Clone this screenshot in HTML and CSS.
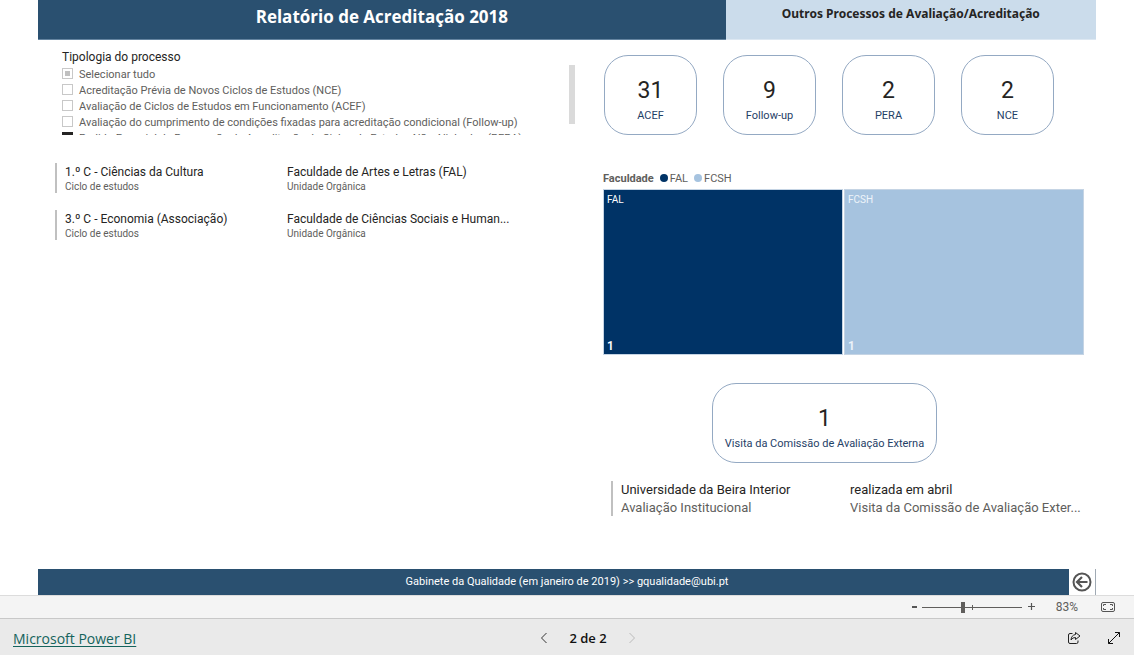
FILE: index.html
```html
<!DOCTYPE html>
<html lang="pt">
<head>
<meta charset="utf-8">
<title>Relatório de Acreditação 2018</title>
<link rel="stylesheet" href="styles.css">
</head>
<body>
<main class="report">
  <header class="header">
    <h1 class="header-title">Relatório de Acreditação 2018</h1>
    <h2 class="header-side">Outros Processos de Avaliação/Acreditação</h2>
  </header>

  <div class="content">
    <section class="left">
      <fieldset class="slicer">
        <legend class="slicer-title">Tipologia do processo</legend>
        <div class="slicer-body">
          <div class="slicer-list">
            <label class="option"><input class="check partial" type="checkbox">Selecionar tudo</label>
            <label class="option"><input class="check" type="checkbox">Acreditação Prévia de Novos Ciclos de Estudos (NCE)</label>
            <label class="option"><input class="check" type="checkbox">Avaliação de Ciclos de Estudos em Funcionamento (ACEF)</label>
            <label class="option"><input class="check" type="checkbox">Avaliação do cumprimento de condições fixadas para acreditação condicional (Follow-up)</label>
            <label class="option"><input class="check" type="checkbox" checked>Pedido Especial de Renovação da Acreditação de Ciclos de Estudos Não-Alinhados (PERA)</label>
          </div>
          <div class="scroll-thumb"></div>
        </div>
      </fieldset>

      <div class="rows">
        <div class="row">
          <div class="cell"><p class="value">1.º C - Ciências da Cultura</p><p class="caption">Ciclo de estudos</p></div>
          <div class="cell"><p class="value">Faculdade de Artes e Letras (FAL)</p><p class="caption">Unidade Orgânica</p></div>
        </div>
        <div class="row">
          <div class="cell"><p class="value">3.º C - Economia (Associação)</p><p class="caption">Ciclo de estudos</p></div>
          <div class="cell"><p class="value">Faculdade de Ciências Sociais e Human...</p><p class="caption">Unidade Orgânica</p></div>
        </div>
      </div>
    </section>

    <section class="right">
      <div class="cards">
        <div class="card"><span class="number">31</span><span class="label">ACEF</span></div>
        <div class="card"><span class="number">9</span><span class="label">Follow-up</span></div>
        <div class="card"><span class="number">2</span><span class="label">PERA</span></div>
        <div class="card"><span class="number">2</span><span class="label">NCE</span></div>
      </div>

      <div class="legend">
        <strong class="legend-title">Faculdade</strong>
        <span class="legend-item"><i class="dot dot-dark"></i>FAL</span>
        <span class="legend-item"><i class="dot dot-light"></i>FCSH</span>
      </div>
      <div class="treemap">
        <div class="tile tile-dark"><span>FAL</span><span class="tile-value">1</span></div>
        <div class="tile tile-light"><span>FCSH</span><span class="tile-value">1</span></div>
      </div>

      <div class="card card-wide"><span class="number">1</span><span class="label">Visita da Comissão de Avaliação Externa</span></div>

      <div class="visit">
        <div class="cell"><p class="value">Universidade da Beira Interior</p><p class="caption">Avaliação Institucional</p></div>
        <div class="cell"><p class="value">realizada em abril</p><p class="caption">Visita da Comissão de Avaliação Exter...</p></div>
      </div>
    </section>
  </div>

  <footer class="report-footer">
    <p class="contact">Gabinete da Qualidade (em janeiro de 2019) &gt;&gt; gqualidade@ubi.pt</p>
    <button class="back" aria-label="Voltar">
      <svg width="20" height="20" viewBox="0 0 20 20" fill="none" stroke="#555" stroke-width="2"><circle cx="10" cy="10" r="8.5"/><path d="M15.500 10H5.500M10 5l-5 5 5 5" stroke-width="2.200"/></svg>
    </button>
  </footer>
</main>

<div class="zoombar">
  <button class="zoom-step" aria-label="Reduzir"><svg width="7" height="11" viewBox="0 0 7 11"><path d="M1 4h5v2H1z" fill="#555"/></svg></button>
  <input class="zoom-range" type="range" min="0" max="100" value="41" aria-label="Zoom">
  <button class="zoom-step" aria-label="Ampliar"><svg width="9" height="11" viewBox="0 0 9 11"><path d="M1 4.500h7M4.500 1v7" stroke="#555" stroke-width="1.200"/></svg></button>
  <button class="zoom-level">83%</button>
  <button class="fit" aria-label="Ajustar à página">
    <svg width="14" height="11" viewBox="0 0 14 11" fill="none" stroke="#555"><rect x=".5" y=".5" width="13" height="9" rx="1.500"/><path d="M5 2.500H2.500V4M9 2.500h2.500V4M5 7.500H2.500V6M9 7.500h2.500V6"/></svg>
  </button>
</div>

<nav class="statusbar">
  <a class="brand" href="#">Microsoft Power BI</a>
  <div class="pager">
    <button class="icon-button" aria-label="Página anterior"><svg width="8" height="12" viewBox="0 0 8 12" fill="none" stroke="#333"><path d="M6.500 1l-5 5 5 5"/></svg></button>
    <span>2 de 2</span>
    <button class="icon-button" aria-label="Página seguinte" disabled><svg width="8" height="12" viewBox="0 0 8 12" fill="none" stroke="#bbb"><path d="M1.500 1l5 5-5 5"/></svg></button>
  </div>
  <div class="actions">
    <button class="icon-button" aria-label="Partilhar"><svg width="14" height="14" viewBox="0 0 14 14" fill="none" stroke="#222"><path d="M5.500 2.500H3q-1.500 0-1.500 1.500v7q0 1.500 1.500 1.500h6.500q1.500 0 1.500-1.500v-1.500"/><path d="M8.500 1.500L13 5 8.500 8.500v-2Q5.500 6.300 4 9q.3-4.800 4.500-5.500z"/></svg></button>
    <button class="icon-button" aria-label="Ecrã inteiro"><svg width="14" height="14" viewBox="0 0 14 14" fill="none" stroke="#111"><path d="M1.500 12.500l11-11M8 1.500h4.500V6M1.500 8v4.500H6"/></svg></button>
  </div>
</nav>
</body>
</html>
```
FILE: styles.css
```css
* { box-sizing: border-box; }

body {
  margin: 0;
  min-height: 100vh;
  display: flex;
  flex-direction: column;
  background: #fff;
  color: #252423;
  font-family: Roboto, "Segoe UI", sans-serif;
  font-size: 12px;
}

h1, h2, p { margin: 0; }

button {
  display: flex;
  align-items: center;
  justify-content: center;
  padding: 0;
  border: 0;
  background: none;
  color: inherit;
  font: inherit;
}

svg { display: block; }

.report {
  flex: 1;
  display: flex;
  flex-direction: column;
  padding: 0 38px;
}

.header {
  display: grid;
  grid-template-columns: 65fr 35fr;
  height: 40px;
  text-align: center;
}

.header-title {
  padding-top: 4px;
  border-bottom: 1px solid #6484a0;
  background: #2a5070;
  color: #fff;
  font-family: "Open Sans", sans-serif;
  font-size: 17px;
  line-height: 26px;
}

.header-side {
  padding-top: 4px;
  border-bottom: 1px solid #dde8f2;
  background: #cbdceb;
  font-family: "Noto Sans", sans-serif;
  font-size: 12px;
  line-height: 20px;
}

.content {
  flex: 1;
  display: grid;
  grid-template-columns: 548fr 481fr;
  padding: 0 12px 0 17px;
}

.left { padding-top: 9px; min-width: 0; }

.slicer {
  margin: 0;
  padding: 0 28px 0 7px;
  border: 0;
  min-width: 0;
}

.slicer-title {
  padding: 0;
  font-size: 12px;
  line-height: 16px;
}

.slicer-body {
  display: flex;
  justify-content: space-between;
}

.slicer-list {
  height: 70px;
  padding-top: 2px;
  overflow: hidden;
  white-space: nowrap;
}

.option {
  display: flex;
  align-items: center;
  gap: 6px;
  height: 16px;
  color: #605e5c;
  font-size: 11px;
  line-height: 16px;
}

.check {
  appearance: none;
  width: 11px;
  height: 11px;
  margin: 0 0 3px;
  border: 1px solid #c8c8c8;
  background: #fff;
}

.check:checked { border-color: #252423; background: #252423; }

.check.partial {
  padding: 2px;
  background: #c0c0c0 content-box;
}

.scroll-thumb {
  width: 6px;
  height: 59px;
  background: #dadada;
}

.rows {
  display: grid;
  gap: 17px;
  margin-top: 28px;
}

.row {
  display: grid;
  grid-template-columns: 222px 1fr;
  padding-left: 8px;
  border-left: 2px solid #c0c0c0;
}

.value { font-size: 12px; line-height: 18px; white-space: nowrap; }

.caption { color: #605e5c; font-size: 10px; line-height: 12px; white-space: nowrap; }

.right { min-width: 0; padding-top: 15px; }

.cards {
  display: grid;
  grid-template-columns: repeat(4, 1fr);
  gap: 26px;
  padding: 0 30px 0 1px;
}

.card {
  display: flex;
  flex-direction: column;
  align-items: center;
  height: 80px;
  padding-top: 20px;
  border: 1px solid #94a9c3;
  border-radius: 24px;
}

.number {
  font-size: 23px;
  line-height: 30px;
}

.label {
  color: #1f4167;
  font-size: 11px;
  line-height: 20px;
}

.legend {
  display: flex;
  align-items: center;
  gap: 6px;
  margin-top: 35px;
  height: 16px;
  color: #605e5c;
  font-size: 11px;
}

.legend-item { display: flex; align-items: center; gap: 2px; }

.dot { width: 8px; height: 8px; border-radius: 50%; }

.dot-dark { background: #003366; }

.dot-light { background: #a6c3df; }

.treemap {
  display: grid;
  grid-template-columns: 1fr 1fr;
  gap: 1px;
  margin-top: 3px;
  height: 166px;
}

.tile {
  display: flex;
  flex-direction: column;
  justify-content: space-between;
  padding: 2px 3px 0;
  border: 1px solid #c5d4e4;
  color: #fff;
  font-size: 10px;
  line-height: 16px;
}

.tile-dark { background: #003366; }

.tile-light { background: #a6c3df; color: #eef4fa; }

.tile-value { font-size: 12px; font-weight: 600; }

.card-wide {
  width: 225px;
  margin: 28px 0 0 109px;
}

.visit {
  display: grid;
  grid-template-columns: 229px 1fr;
  margin: 18px 0 0 8px;
  padding-left: 8px;
  border-left: 2px solid #c0c0c0;
}

.visit .value { font-size: 13px; line-height: 18px; }

.visit .caption { font-size: 13px; line-height: 17px; }

.report-footer {
  display: flex;
  height: 26px;
}

.contact {
  flex: 1;
  padding-left: 27px;
  background: #2a5070;
  color: #fff;
  font-size: 11px;
  line-height: 26px;
  text-align: center;
}

.back {
  width: 27px;
  border-right: 1px solid #a0aab4;
}

.zoombar {
  display: flex;
  align-items: center;
  justify-content: flex-end;
  height: 24px;
  padding-right: 19px;
  border-top: 1px solid #dcdcdc;
  border-bottom: 1px solid #c8c8c8;
  background: #f4f4f4;
  color: #605e5c;
}

.zoom-range {
  appearance: none;
  width: 100px;
  height: 11px;
  margin: 0 5px 0 4px;
  background:
    linear-gradient(#605e5c, #605e5c) 50px 3px / 1px 5px no-repeat,
    linear-gradient(#605e5c, #605e5c) 0 5px / 100% 1px no-repeat;
}

.zoom-range::-webkit-slider-thumb {
  appearance: none;
  width: 4px;
  height: 11px;
  background: #605e5c;
}

.zoom-level { margin: 0 23px 0 20px; font-size: 12px; }

.statusbar {
  display: grid;
  grid-template-columns: 1fr auto 1fr;
  align-items: center;
  height: 36px;
  padding: 0 13px;
  background: #eaeaea;
  color: #111;
  font-family: "Open Sans", "Segoe UI", sans-serif;
}

.brand {
  justify-self: start;
  padding-top: 2px;
  color: #14635c;
  font-size: 14px;
  text-underline-offset: 2px;
}

.pager {
  display: flex;
  align-items: center;
  gap: 21px;
  margin: 2px -42px 0 0;
  font-size: 13px;
  font-weight: 600;
}

.actions {
  display: flex;
  justify-content: flex-end;
  gap: 26px;
  padding-top: 2px;
}
```
